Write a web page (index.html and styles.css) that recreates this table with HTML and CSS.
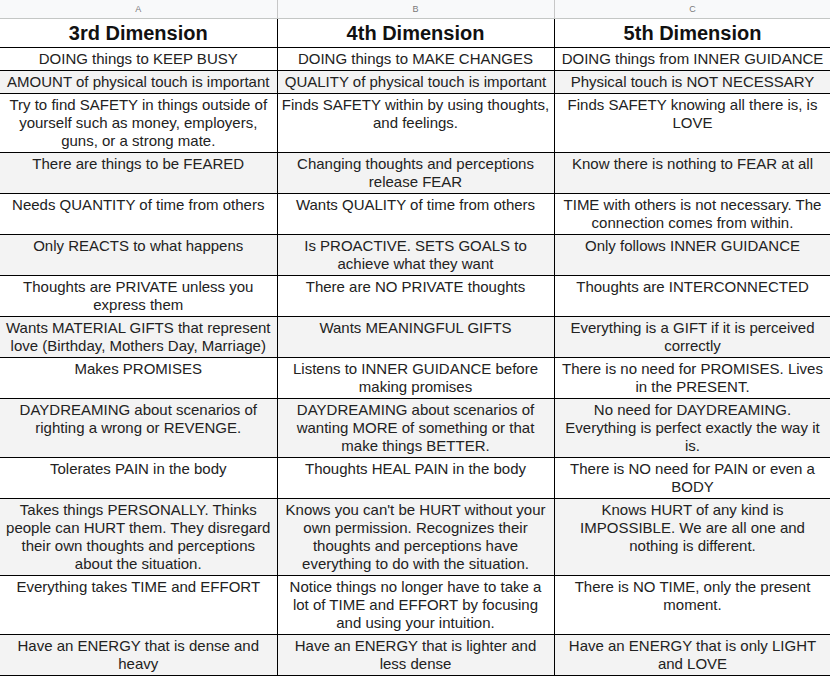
FILE: index.html
```html
<!DOCTYPE html>
<html lang="en">
<head>
<meta charset="utf-8">
<title>Dimensions</title>
<link rel="stylesheet" href="styles.css">
</head>
<body>
<table class="sheet">
  <colgroup><col class="col"><col class="col"><col class="col"></colgroup>
  <thead>
    <tr class="letters"><th>A</th><th>B</th><th>C</th></tr>
    <tr class="titles"><th>3rd Dimension</th><th>4th Dimension</th><th>5th Dimension</th></tr>
  </thead>
  <tbody>
    <tr><td>DOING things to KEEP BUSY</td><td>DOING things to MAKE CHANGES</td><td>DOING things from INNER GUIDANCE</td></tr>
    <tr class="alt"><td>AMOUNT of physical touch is important</td><td>QUALITY of physical touch is important</td><td>Physical touch is NOT NECESSARY</td></tr>
    <tr><td>Try to find SAFETY in things outside of<br>yourself such as money, employers,<br>guns, or a strong mate.</td><td>Finds SAFETY within by using thoughts,<br>and feelings.</td><td>Finds SAFETY knowing all there is, is<br>LOVE</td></tr>
    <tr class="alt"><td>There are things to be FEARED</td><td>Changing thoughts and perceptions<br>release FEAR</td><td>Know there is nothing to FEAR at all</td></tr>
    <tr><td>Needs QUANTITY of time from others</td><td>Wants QUALITY of time from others</td><td>TIME with others is not necessary. The<br>connection comes from within.</td></tr>
    <tr class="alt"><td>Only REACTS to what happens</td><td>Is PROACTIVE. SETS GOALS to<br>achieve what they want</td><td>Only follows INNER GUIDANCE</td></tr>
    <tr><td>Thoughts are PRIVATE unless you<br>express them</td><td>There are NO PRIVATE thoughts</td><td>Thoughts are INTERCONNECTED</td></tr>
    <tr class="alt"><td>Wants MATERIAL GIFTS that represent<br>love (Birthday, Mothers Day, Marriage)</td><td>Wants MEANINGFUL GIFTS</td><td>Everything is a GIFT if it is perceived<br>correctly</td></tr>
    <tr><td>Makes PROMISES</td><td>Listens to INNER GUIDANCE before<br>making promises</td><td>There is no need for PROMISES. Lives<br>in the PRESENT.</td></tr>
    <tr class="alt"><td>DAYDREAMING about scenarios of<br>righting a wrong or REVENGE.</td><td>DAYDREAMING about scenarios of<br>wanting MORE of something or that<br>make things BETTER.</td><td>No need for DAYDREAMING.<br>Everything is perfect exactly the way it<br>is.</td></tr>
    <tr><td>Tolerates PAIN in the body</td><td>Thoughts HEAL PAIN in the body</td><td>There is NO need for PAIN or even a<br>BODY</td></tr>
    <tr class="alt"><td>Takes things PERSONALLY. Thinks<br>people can HURT them. They disregard<br>their own thoughts and perceptions<br>about the situation.</td><td>Knows you can't be HURT without your<br>own permission. Recognizes their<br>thoughts and perceptions have<br>everything to do with the situation.</td><td>Knows HURT of any kind is<br>IMPOSSIBLE. We are all one and<br>nothing is different.</td></tr>
    <tr><td>Everything takes TIME and EFFORT</td><td>Notice things no longer have to take a<br>lot of TIME and EFFORT by focusing<br>and using your intuition.</td><td>There is NO TIME, only the present<br>moment.</td></tr>
    <tr class="alt"><td>Have an ENERGY that is dense and<br>heavy</td><td>Have an ENERGY that is lighter and<br>less dense</td><td>Have an ENERGY that is only LIGHT<br>and LOVE</td></tr>
  </tbody>
</table>
</body>
</html>
```

FILE: styles.css
```css
html, body {
  margin: 0;
  padding: 0;
  background: #ffffff;
  overflow: hidden;
}

.sheet {
  border-collapse: collapse;
  table-layout: fixed;
  width: 831px;
  font-family: "Liberation Sans", Arial, sans-serif;
  color: #222222;
}

.col {
  width: 277px;
}

.letters th {
  height: 18px;
  padding: 0;
  background: #f8f9fa;
  border-right: 1px solid #c7c7c7;
  border-bottom: 1px solid #c4c7c5;
  font-size: 9px;
  font-weight: normal;
  color: #7a7a7a;
  line-height: 18px;
  text-align: center;
  vertical-align: middle;
}

.titles th {
  height: 28px;
  padding: 0;
  border: 1px solid #000000;
  border-top: none;
  font-size: 20px;
  font-weight: bold;
  color: #111111;
  line-height: 28px;
  text-align: center;
  vertical-align: middle;
}

.titles th:first-child,
tbody td:first-child {
  border-left: none;
}

tbody td {
  padding: 2px 2px;
  border: 1px solid #000000;
  font-size: 15px;
  line-height: 18px;
  text-align: center;
  vertical-align: top;
  white-space: nowrap;
  overflow: hidden;
}

tbody tr.alt td {
  background: #f3f3f3;
}
```
